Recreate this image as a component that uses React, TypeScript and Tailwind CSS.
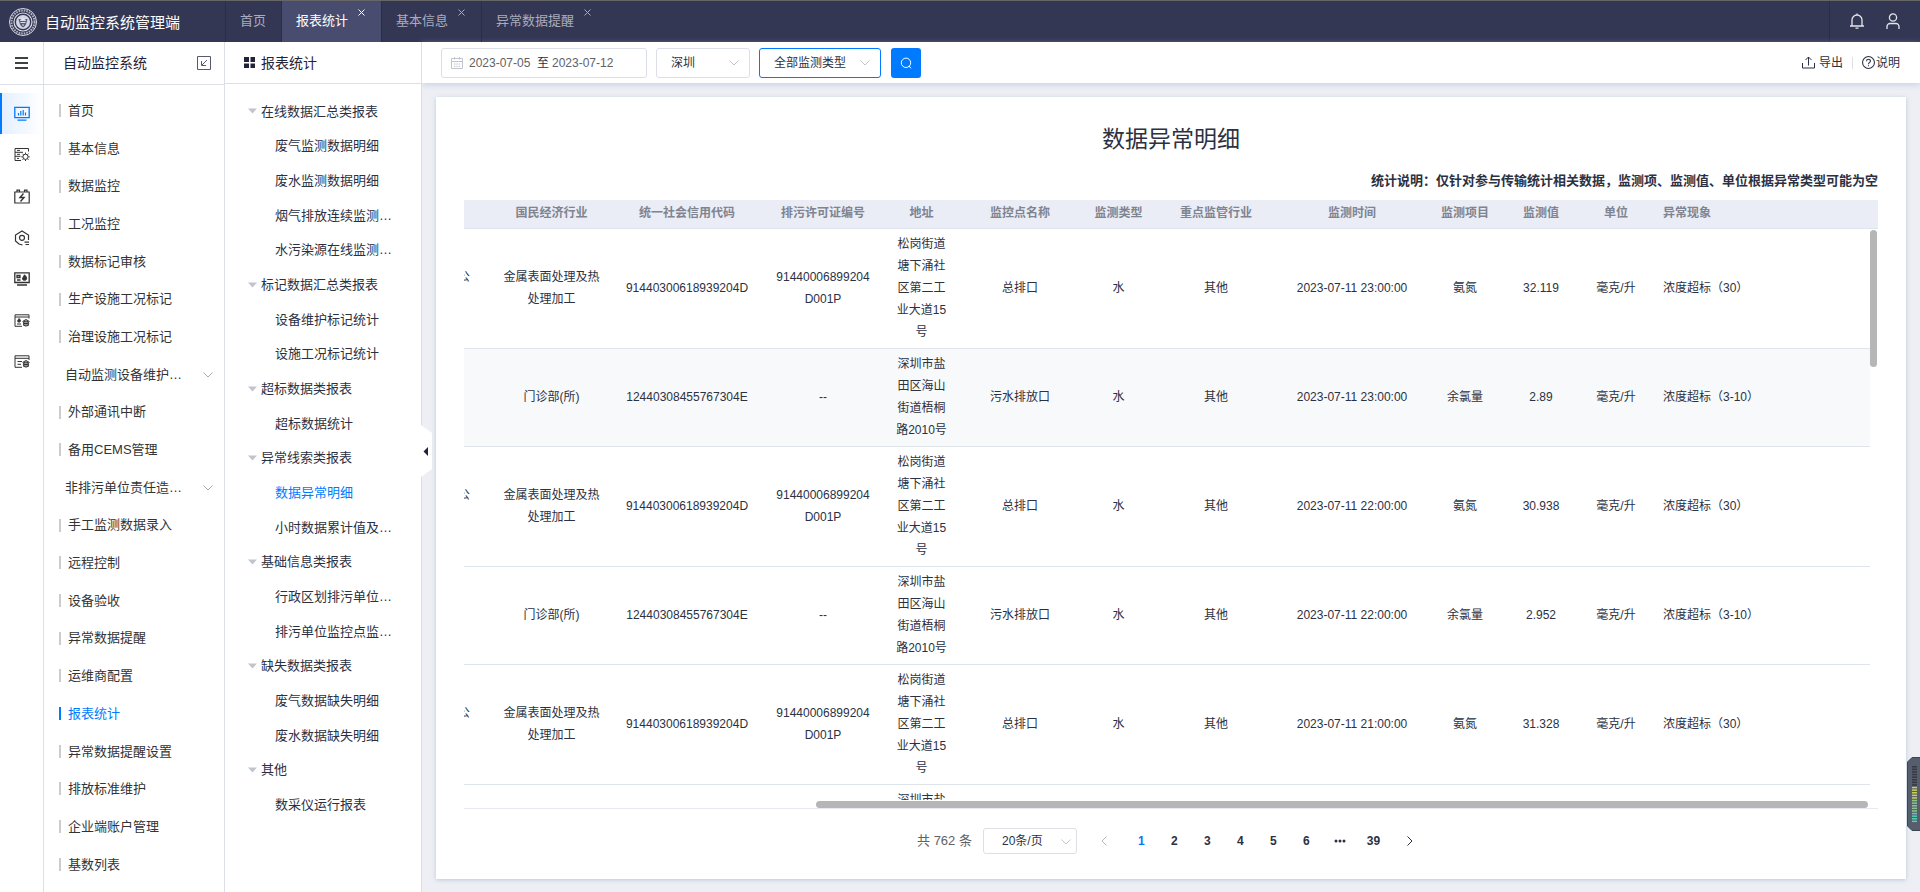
import React from 'react';

const tabs = [
  { name: '首页', closable: false },
  { name: '报表统计', closable: true, active: true },
  { name: '基本信息', closable: true },
  { name: '异常数据提醒', closable: true },
];

const menus = [
  { name: '首页' },
  { name: '基本信息' },
  { name: '数据监控' },
  { name: '工况监控' },
  { name: '数据标记审核' },
  { name: '生产设施工况标记' },
  { name: '治理设施工况标记' },
  { name: '自动监测设备维护…', group: true },
  { name: '外部通讯中断' },
  { name: '备用CEMS管理' },
  { name: '非排污单位责任造…', group: true },
  { name: '手工监测数据录入' },
  { name: '远程控制' },
  { name: '设备验收' },
  { name: '异常数据提醒' },
  { name: '运维商配置' },
  { name: '报表统计', active: true },
  { name: '异常数据提醒设置' },
  { name: '排放标准维护' },
  { name: '企业端账户管理' },
  { name: '基数列表' },
];

const reports = [
  { name: '在线数据汇总类报表', group: true },
  { name: '废气监测数据明细' },
  { name: '废水监测数据明细' },
  { name: '烟气排放连续监测…' },
  { name: '水污染源在线监测…' },
  { name: '标记数据汇总类报表', group: true },
  { name: '设备维护标记统计' },
  { name: '设施工况标记统计' },
  { name: '超标数据类报表', group: true },
  { name: '超标数据统计' },
  { name: '异常线索类报表', group: true },
  { name: '数据异常明细', active: true },
  { name: '小时数据累计值及…' },
  { name: '基础信息类报表', group: true },
  { name: '行政区划排污单位…' },
  { name: '排污单位监控点监…' },
  { name: '缺失数据类报表', group: true },
  { name: '废气数据缺失明细' },
  { name: '废水数据缺失明细' },
  { name: '其他', group: true },
  { name: '数采仪运行报表' },
];

const surface = {
  company: '公',
  industry: '金属表面处理及热处理加工',
  code: '91440300618939204D',
  permit: '91440006899204D001P',
  address: '松岗街道塘下涌社区第二工业大道15号',
  point: '总排口',
  item: '氨氮',
  issue: '浓度超标（30）',
};

const clinic = {
  company: '',
  industry: '门诊部(所)',
  code: '12440308455767304E',
  permit: '--',
  address: '深圳市盐田区海山街道梧桐路2010号',
  point: '污水排放口',
  item: '余氯量',
  issue: '浓度超标（3-10）',
};

const rows = [
  { ...surface, time: '2023-07-11 23:00:00', value: '32.119' },
  { ...clinic, time: '2023-07-11 23:00:00', value: '2.89', hover: true },
  { ...surface, time: '2023-07-11 22:00:00', value: '30.938' },
  { ...clinic, time: '2023-07-11 22:00:00', value: '2.952' },
  { ...surface, time: '2023-07-11 21:00:00', value: '31.328' },
  { ...clinic, time: '2023-07-11 21:00:00', value: '2.91' },
];

const heads = ['', '国民经济行业', '统一社会信用代码', '排污许可证编号', '地址', '监控点名称', '监测类型', '重点监管行业', '监测时间', '监测项目', '监测值', '单位'];

const Cols = () => (
  <colgroup>
    <col className="w-5" />
    <col className="w-[135px]" />
    <col className="w-34" />
    <col className="w-34" />
    <col className="w-[61px]" />
    <col className="w-34" />
    <col className="w-[61px]" />
    <col className="w-[134px]" />
    <col className="w-[138px]" />
    <col className="w-[88px]" />
    <col className="w-16" />
    <col className="w-[86px]" />
    <col />
  </colgroup>
);

const Chevron = ({ className = '' }: { className?: string }) => (
  <svg viewBox="0 0 10 6" className={`h-[6px] w-[10px] ${className}`} fill="none" stroke="currentColor">
    <path d="M.5.5 5 5 9.500.5" />
  </svg>
);

const Logo = () => (
  <svg viewBox="0 0 30 30" className="h-[30px] w-[30px]" fill="none" stroke="#d8dae6">
    <circle cx="15" cy="15" r="13.5" strokeWidth="1" />
    <circle cx="15" cy="15" r="11.500" strokeWidth="2" strokeDasharray="1.600 1" opacity=".75" />
    <circle cx="15" cy="15" r="9" strokeWidth="1.200" />
    <circle cx="15" cy="15" r="7" fill="#d3d6e2" stroke="none" />
    <path d="M10.500 12h9l-1 4c-.5 2-2 3.500-3.500 4.500-1.500-1-3-2.500-3.500-4.500z" fill="#5a5e7c" stroke="none" />
    <path d="M15 9.500l2.500 4h-5zM12.500 15.500h5M14 18h2" strokeWidth="1" fill="#e6e8f0" />
  </svg>
);

const Gear = ({ x, y }: { x: number; y: number }) => (
  <g transform={`translate(${x} ${y})`}>
    <circle r="2.600" />
    <path d="M0-4.200v1.500M0 2.700v1.500M-4.200 0h1.500M2.700 0h1.500M-3-3l1.100 1.100M1.900 1.900 3 3M-3 3l1.100-1.100M1.900-1.900 3-3" />
  </g>
);

const Badge = () => (
  <g>
    <path d="M8.500 8.500 12 6.500l3.500 2M9 9h6M9.500 10.500h5M9 12h6" />
    <circle cx="12" cy="10.500" r="2.600" />
  </g>
);

const railIcons = [
  <g key="0">
    <path d="M.8 1.300h14.400v10.400H.8zM3.500 14.200h9" strokeWidth="1.300" />
    <path d="M4.500 9.500V7M6.800 9.500V5M9.200 9.500V4M11.500 9.500V6.500" strokeWidth="1.200" />
  </g>,
  <g key="1">
    <path d="M14.500 4.500v-3H1v3.800h8M1 5.300v8.200h6M1 9.300h5.500M3 3.400h3M3 7.300h3M3 11.400h2" />
    <Gear x={11.5} y={9.8} />
  </g>,
  <g key="2">
    <path d="M.8 3h14.400v11H.8zM3 2.800V1.200h2.500v1.600M10.500 2.800V1.200H13v1.600" strokeWidth="1.200" />
    <path d="M9.500 4.500 6 8.500h4l-3.500 4" strokeWidth="1.400" />
  </g>,
  <g key="3">
    <path d="M8.500 15 5 14 1.500 11V5L8 1l6.500 4v5" strokeWidth="1.200" />
    <circle cx="8" cy="7.800" r="2.500" strokeWidth="1.200" />
    <path d="M10.500 12.200h4.500M11.500 14.500h3.500" strokeWidth="1.200" />
  </g>,
  <g key="4">
    <path d="M.8 1.800h14.400v9.700H.8zM3 14h10M3 4.500h3v2H3zM3 9h3.500" strokeWidth="1.300" />
    <path d="M10.500 3.800c2 2 2.500 3 2 4.500-.5 1.300-3.500 1.300-4 0-.4-1.500 1.300-2.500 2-4.500z" fill="currentColor" />
  </g>,
  <g key="5">
    <path d="M15 5.500V1.800H1v11.500h7M1 4h14M3 11h4" />
    <path d="M5 5.500c1.500 1.500 1.700 2 1.300 3-.4.800-2.200.8-2.600 0-.3-1 .8-1.700 1.300-3z" fill="currentColor" />
    <Badge />
  </g>,
  <g key="6">
    <path d="M15 6V1.800H1v11.500h7M1 4.300h14M3.500 7.500H8M3.500 10.300H7" />
    <Badge />
  </g>,
];

const Header = () => (
  <header className="flex h-[42px] shrink-0 border-t border-[#666] bg-[#343754] text-[13px] text-[#a9acbf]">
    <div className="flex w-[225px] items-center gap-[7px] pl-2 text-white">
      <Logo />
      <h1 className="pt-1 text-[15px] whitespace-nowrap">自动监控系统管理端</h1>
    </div>
    <nav className="flex">
      {tabs.map((t) => (
        <div key={t.name} className={`relative flex items-center border-l border-[#2a2d4a] pb-[2px] pl-[14px] ${t.closable ? 'pr-[33px]' : 'pr-[15px]'} ${t.active ? 'bg-[#484c6e] text-white' : ''}`}>
          <a href="#">{t.name}</a>
          {t.closable && (
            <button aria-label="关闭" className="absolute top-2 right-[16px]">
              <svg viewBox="0 0 7 7" className="h-[7px] w-[7px]" stroke="currentColor">
                <path d="M.5.5l6 6M6.500.5l-6 6" />
              </svg>
            </button>
          )}
        </div>
      ))}
    </nav>
    <div className="ml-auto flex w-[91px] items-center gap-5 border-l border-[#2a2d4a] pb-[2px] pl-[19px] text-[#e4e5ec]">
      <button aria-label="消息">
        <svg viewBox="0 0 16 16" className="h-4 w-4" fill="none" stroke="currentColor" strokeWidth="1.300">
          <path d="M3 13V7a5 5 0 0 1 10 0v6M1 13h14M8 .5V2M6.500 15.200h3" />
        </svg>
      </button>
      <button aria-label="用户">
        <svg viewBox="0 0 16 16" className="h-4 w-4" fill="none" stroke="currentColor" strokeWidth="1.300">
          <circle cx="8" cy="4.500" r="3.600" />
          <path d="M2 16v-2.500a3 3 0 0 1 3-3h6a3 3 0 0 1 3 3V16" />
        </svg>
      </button>
    </div>
  </header>
);

const Rail = () => (
  <div className="w-11 shrink-0 border-r border-[#dcdfe6]">
    <button aria-label="折叠菜单" className="flex h-[43px] w-full flex-col items-center justify-center gap-[3px] border-b border-[#dcdfe6]">
      <span className="h-[2px] w-[13px] bg-[#3f433f]" />
      <span className="h-[2px] w-[13px] bg-[#3f433f]" />
      <span className="h-[2px] w-[13px] bg-[#3f433f]" />
    </button>
    <div className="mt-2 flex h-[290px] flex-col">
      {railIcons.map((icon, i) => (
        <button key={i} aria-label={`模块${i + 1}`} className={`flex w-full flex-1 items-center border-l-2 pl-3 ${i === 0 ? 'border-[#007bff] bg-linear-to-r from-[#e4f0ff] to-white text-[#007bff]' : 'border-transparent text-[#333]'}`}>
          <svg viewBox="0 0 16 16" className="h-4 w-4" fill="none" stroke="currentColor">
            {icon}
          </svg>
        </button>
      ))}
    </div>
  </div>
);

const SideMenu = () => (
  <aside className="flex w-[181px] shrink-0 flex-col border-r border-[#dcdfe6]">
    <div className="flex h-[43px] items-center justify-between border-b border-[#dcdfe6] pr-[13px] pl-[19px] text-sm text-[#1f2438]">
      自动监控系统
      <button aria-label="收起">
        <svg viewBox="0 0 14 14" className="h-[14px] w-[14px]" fill="none" stroke="#555a70">
          <path d="M.5.5h13v13H.5zM10 4l-5 5M4.500 5v4.500H9" />
        </svg>
      </button>
    </div>
    <ul className="flex flex-1 flex-col pt-[7px] pb-[9px] text-[13px] text-[#333]">
      {menus.map((m) => (
        <li key={m.name} className="flex flex-1 items-center pr-[11px] pl-[15px]">
          {!m.group && <span className={`h-[13px] w-[2px] ${m.active ? 'bg-[#007bff]' : 'bg-[#ccc]'}`} />}
          <a href="#" className={`whitespace-nowrap ${m.group ? 'pl-[6px]' : 'pl-[7px]'} ${m.active ? 'text-[#007bff]' : ''}`}>{m.name}</a>
          {m.group && <Chevron className="ml-auto text-[#aaa]" />}
        </li>
      ))}
    </ul>
  </aside>
);

const ReportTree = () => (
  <aside className="relative flex w-[197px] shrink-0 flex-col border-r border-[#dcdfe6] bg-white">
    <div className="flex h-[42px] items-center gap-[6px] border-b border-[#dcdfe6] pl-[19px] text-sm text-[#1f2438]">
      <svg viewBox="0 0 11 11" className="h-[11px] w-[11px]" fill="#1f2438">
        <path d="M0 0h5v5H0zM6.500 0h4.500v5H6.500zM0 6.500h5V11H0zM6.500 6.500h4.500V11H6.500z" />
      </svg>
      报表统计
    </div>
    <ul className="flex flex-1 flex-col pt-[10px] pb-[70px] text-[13px] text-[#2c3142]">
      {reports.map((r) => (
        <li key={r.name} className={`flex flex-1 items-center gap-1 ${r.group ? 'pl-[23px]' : 'pl-[50px]'}`}>
          {r.group && (
            <svg viewBox="0 0 9 6" className="h-[6px] w-[9px]" fill="#c0c4cc">
              <path d="M0 .5h9L4.500 5.500z" />
            </svg>
          )}
          <a href="#" className={`whitespace-nowrap ${r.active ? 'text-[#007bff]' : ''}`}>{r.name}</a>
        </li>
      ))}
    </ul>
    <button aria-label="收起面板" className="absolute top-[383px] -right-[11px]">
      <svg viewBox="0 0 11 52" className="h-[52px] w-[11px]">
        <path d="M0 0l11 8v36L0 52z" fill="#fff" />
        <path d="M7 22v9l-4.500-4.500z" fill="#1f2438" />
      </svg>
    </button>
  </aside>
);

const Filters = () => (
  <div className="flex h-[41px] shrink-0 items-center bg-white pr-5 pl-[19px] text-xs text-[#2c3142] shadow-[0_2px_6px_rgba(180,195,215,0.6)]">
    <div className="flex h-[30px] w-[206px] items-center rounded-[3px] border border-[#dcdfe6] pl-[9px] text-[#606266]">
      <svg viewBox="0 0 12 12" className="mr-[6px] h-3 w-3" fill="none" stroke="#c0c4cc">
        <path d="M.5 1.500h11v10H.5zM.5 4.500h11M3.500 0v2.500M8.500 0v2.500M3 7h1.500M5.300 7h1.500M7.600 7h1.500M3 9.300h1.500M5.300 9.300h1.500M7.600 9.300h1.500" />
      </svg>
      <input aria-label="开始日期" defaultValue="2023-07-05" className="w-[68px] outline-none" />
      <span className="w-[15px] text-[#2c3142]">至</span>
      <input aria-label="结束日期" defaultValue="2023-07-12" className="w-[68px] outline-none" />
    </div>
    <div className="relative ml-[9px]">
      <select aria-label="城市" className="h-[30px] w-[94px] appearance-none rounded-[3px] border border-[#dcdfe6] pl-[14px]">
        <option>深圳</option>
      </select>
      <Chevron className="pointer-events-none absolute top-3 right-[11px] text-[#c0c4cc]" />
    </div>
    <div className="relative ml-[9px]">
      <select aria-label="监测类型" className="h-[30px] w-[122px] appearance-none rounded-[3px] border border-[#007bff] pl-[14px]">
        <option>全部监测类型</option>
      </select>
      <Chevron className="pointer-events-none absolute top-3 right-[11px] text-[#c0c4cc]" />
    </div>
    <button aria-label="查询" className="ml-[10px] flex h-[30px] w-[30px] items-center justify-center rounded-[3px] bg-[#007bff]">
      <svg viewBox="0 0 12 12" className="h-3 w-3" fill="none" stroke="#fff">
        <circle cx="6" cy="5.800" r="4.700" />
        <path d="M9 9l2 2.300" />
      </svg>
    </button>
    <button className="ml-auto flex items-center gap-1">
      <svg viewBox="0 0 13 13" className="h-[13px] w-[13px]" fill="none" stroke="currentColor">
        <path d="M.5 7v5h12V7M6.500 9.500V1M3.500 4l3-3 3 3" />
      </svg>
      导出
    </button>
    <span className="mx-[9px] h-3 w-px bg-[#dcdfe6]" />
    <button className="flex items-center gap-px">
      <svg viewBox="0 0 12 12" className="h-[13px] w-[13px]" fill="none" stroke="currentColor">
        <circle cx="6" cy="6" r="5.500" />
        <path d="M4.200 4.800c0-2.300 3.600-2.300 3.600-.1C7.800 6 6 5.900 6 7.500M6 8.500v1" />
      </svg>
      说明
    </button>
  </div>
);

const DataTable = () => (
  <div className="mt-[9px] flex min-h-0 flex-1 flex-col border-b border-[#e6e9f2] text-xs">
    <table className="w-full table-fixed bg-[#eaedf5] text-[#808390]">
      <Cols />
      <thead>
        <tr className="h-7 border-b border-[#e0e4ee]">
          {heads.map((h, i) => (
            <th key={i} className="pb-[2px] font-bold whitespace-nowrap">{h}</th>
          ))}
          <th className="pb-[2px] pl-1 text-left font-bold">异常现象</th>
        </tr>
      </thead>
    </table>
    <div className="relative min-h-0 flex-1 pr-2 pb-2">
      <div className="h-full overflow-hidden">
        <table className="w-full table-fixed text-center leading-[22px] text-[#2c3142]">
          <Cols />
          <tbody>
            {rows.map((r, i) => (
              <tr key={i} className={`border-b border-[#dfe3ea] ${r.hover ? 'bg-[#f8f9fb]' : ''}`}>
                <td>
                  <div className="flex h-11 w-[6px] justify-end overflow-hidden">{r.company}</div>
                </td>
                <td className="px-[19px] break-all">{r.industry}</td>
                <td>{r.code}</td>
                <td className="px-5 break-all">{r.permit}</td>
                <td className="px-1 pt-1 pb-[5px]">{r.address}</td>
                <td>{r.point}</td>
                <td>水</td>
                <td>其他</td>
                <td>{r.time}</td>
                <td>{r.item}</td>
                <td>{r.value}</td>
                <td>毫克/升</td>
                <td className="pl-1 text-left">{r.issue}</td>
              </tr>
            ))}
          </tbody>
        </table>
      </div>
      <div className="absolute top-px right-px h-[137px] w-[7px] rounded-full bg-[#b6b6b6]" />
      <div className="absolute right-[10px] bottom-0 h-[7px] w-[1052px] rounded-full bg-[#b6b6b6]" />
    </div>
  </div>
);

const Pagination = () => (
  <div className="flex h-[70px] shrink-0 items-center justify-center gap-[11px] pb-[7px] pl-[2px] text-[13px]">
    <span className="text-[#606266]">共 762 条</span>
    <div className="relative">
      <select aria-label="每页条数" className="h-[26px] w-[94px] appearance-none rounded-[3px] border border-[#dcdfe6] pl-[18px] text-xs text-[#2c3142]">
        <option>20条/页</option>
      </select>
      <Chevron className="pointer-events-none absolute top-[11px] right-[6px] text-[#c0c4cc]" />
    </div>
    <div className="flex items-center text-xs font-bold text-[#2c3142]">
      <button aria-label="上一页" className="mr-1 flex w-[33px] justify-center">
        <Chevron className="rotate-90 text-[#b4b8c2]" />
      </button>
      {['1', '2', '3', '4', '5', '6'].map((p) => (
        <button key={p} className={`w-[33px] ${p === '1' ? 'text-[#007bff]' : ''}`}>{p}</button>
      ))}
      <button aria-label="向后 5 页" className="flex w-[34px] justify-center">
        <svg viewBox="0 0 12 4" className="h-1 w-3" fill="currentColor">
          <circle cx="2" cy="2" r="1.500" />
          <circle cx="6" cy="2" r="1.500" />
          <circle cx="10" cy="2" r="1.500" />
        </svg>
      </button>
      <button className="w-[33px]">39</button>
      <button aria-label="下一页" className="ml-1 flex w-[33px] justify-center">
        <Chevron className="-rotate-90 text-[#2c3142]" />
      </button>
    </div>
  </div>
);

const Meter = () => (
  <svg viewBox="0 0 13 74" className="absolute right-0 bottom-[61px] h-[74px] w-[13px]">
    <path d="M14 .5H5L.5 5v64L5 73.500h9z" fill="#565d6d" stroke="#3f4452" />
    {Array.from({ length: 22 }, (_, i) => (
      <rect key={i} x="5" y={9 + i * 2.6} width="5" height="1.500" fill={i < 8 ? '#353945' : i < 13 ? '#c9cf5a' : i < 18 ? '#8bc78a' : '#58cfb4'} />
    ))}
  </svg>
);

const App: React.FC = () => {
  return (
    <div className="relative flex h-screen flex-col overflow-hidden bg-white font-['Liberation_Sans','Noto_Sans_CJK_SC',sans-serif]">
      <Header />
      <div className="flex min-h-0 flex-1">
        <Rail />
        <SideMenu />
        <div className="flex min-w-0 flex-1">
          <div className="z-10 flex">
            <ReportTree />
          </div>
          <main className="flex min-w-0 flex-1 flex-col bg-[#edeff4]">
            <Filters />
            <section className="mt-[14px] mr-[14px] mb-[13px] ml-[14px] flex min-h-0 flex-1 flex-col bg-white px-7 shadow-[0_1px_4px_rgba(150,175,205,0.6)]">
              <h2 className="mt-[26px] text-center text-[23px] leading-8 text-[#2c3142]">数据异常明细</h2>
              <p className="mt-4 text-right text-[13px] leading-5 font-bold text-[#2c3142]">
                统计说明：仅针对参与传输统计相关数据，监测项、监测值、单位根据异常类型可能为空
              </p>
              <DataTable />
              <Pagination />
            </section>
          </main>
        </div>
      </div>
      <Meter />
    </div>
  );
};

export default App;
